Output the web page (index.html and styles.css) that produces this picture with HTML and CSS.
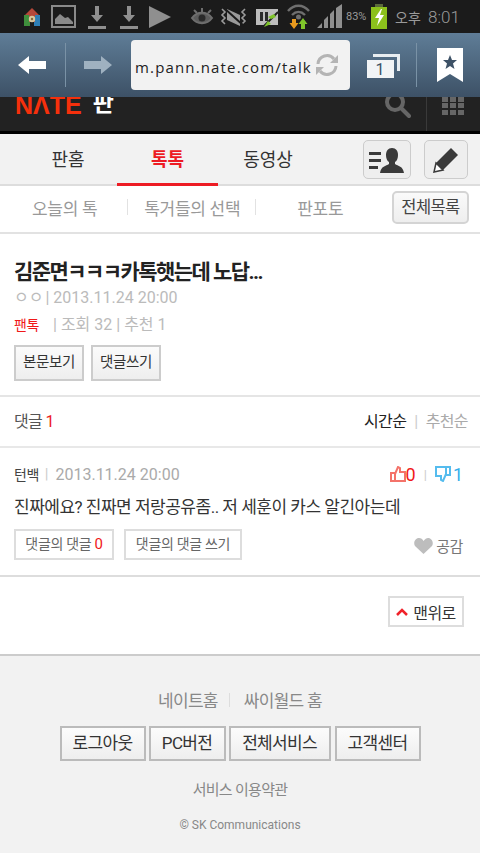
FILE: index.html
```html
<!DOCTYPE html>
<html lang="ko">
<head>
  <meta charset="UTF-8">
  <title>네이트 판 톡톡</title>
  <link rel="stylesheet" href="styles.css">
</head>
<body>
  <div class="status-bar">
    <svg class="status-icons" width="346" height="33" viewBox="0 0 346 33">
      <!-- app icon -->
      <path d="M32 8l8 8H24z" fill="#b5483a"/>
      <rect x="24" y="15" width="6" height="11" fill="#3f8f3c"/>
      <rect x="34" y="15" width="6" height="11" fill="#2f7fb5"/>
      <rect x="29" y="14" width="6" height="8" fill="#b5483a"/>
      <circle cx="32" cy="19" r="3.2" fill="#d8c8a0"/>
      <circle cx="32" cy="19" r="1.2" fill="#8a6a3a"/>
      <!-- picture -->
      <rect x="52" y="6" width="23" height="21" fill="none" stroke="#8a8a8a" stroke-width="2"/>
      <path d="M55 24v-5l5-5 5 4 3-1 5 5v2z" fill="#8a8a8a"/>
      <!-- downloads -->
      <g fill="#8f8f8f">
        <path d="M95 6h4v9h4l-6 7-6-7h4z"/>
        <rect x="88" y="26" width="18" height="3"/>
        <path d="M127 6h4v9h4l-6 7-6-7h4z"/>
        <rect x="120" y="26" width="18" height="3"/>
      </g>
      <path d="M149 6l22 11-22 11z" fill="#8f8f8f"/>
      <!-- eye -->
      <g stroke="#6e6e6e" fill="none">
        <path d="M192 18c5-7 15-7 20 0-5 7-15 7-20 0z" stroke-width="2" fill="#5c5c5c"/>
        <path d="M194 10l3 3M202 8v4M211 10l-3 3" stroke-width="2"/>
      </g>
      <circle cx="202" cy="18" r="3.5" fill="#2a2a2a"/>
      <!-- vibrate -->
      <g fill="none" stroke="#9a9a9a" stroke-width="1.6">
        <path d="M222 9l3 3-3 3 3 3-3 3 3 3"/>
        <path d="M245 9l-3 3 3 3-3 3 3 3-3 3"/>
      </g>
      <path d="M227 9l13 6v11l-13-6z" fill="#9a9a9a"/>
      <path d="M224 8l20 18" stroke="#1b1b1b" stroke-width="2"/>
      <!-- sim -->
      <path d="M256 9h22v16h-22z" fill="#bdbdbd"/>
      <rect x="260" y="12" width="3" height="9" fill="#2a2a2a"/>
      <rect x="265" y="12" width="3" height="9" fill="#2a2a2a"/>
      <path d="M264 26l14-14" stroke="#222" stroke-width="2"/>
      <path d="M268 17l6-3 2 3-5 2zM264 27l4-6 3 3z" fill="#7fc52a"/>
      <!-- wifi -->
      <g fill="none" stroke="#6f6f6f" stroke-width="2.4">
        <path d="M288 11c6-7 15-7 21 0"/>
        <path d="M292 15c4-4 9-4 13 0"/>
      </g>
      <circle cx="298.500" cy="17" r="2.5" fill="#6f6f6f"/>
      <path d="M292 19h4v4h2.500l-4.500 6-4.500-6H292z" fill="#e89a1e"/>
      <path d="M301 29v-5h-2.500l4.500-6 4.500 6H305v5z" fill="#7fc52a"/>
      <!-- signal -->
      <path d="M317 28l5-5v5zM324 28v-8l4-4v12zM330 28V14l4-4v18zM336 28V8l6-4v24z" fill="#8f8f8f"/>
    </svg>
    <span class="batt-pct">83%</span>
    <svg class="batt" width="16" height="25" viewBox="0 0 16 25">
      <rect x="4" y="0" width="8" height="3" fill="#5a6a3a"/>
      <rect x="0" y="3" width="16" height="22" fill="#8cc11c"/>
      <path d="M10 5L4 14h4l-2 8 7-11H9l2-6z" fill="#fff"/>
    </svg>
    <span class="ampm">오후</span>
    <span class="clock">8:01</span>
  </div>

  <div class="browser-bar">
    <svg class="tool-back" width="28" height="18" viewBox="0 0 28 18"><path d="M0 9l11-9v5h17v8H11v5z" fill="#fff"/></svg>
    <span class="tool-sep sep-a"></span>
    <svg class="tool-fwd" width="28" height="18" viewBox="0 0 28 18"><path d="M28 9L17 0v5H0v8h17v5z" fill="#9fb1c0"/></svg>
    <div class="url-box">
      <span class="url-text">m.pann.nate.com/talk</span>
      <svg width="24" height="24" viewBox="0 0 24 24" fill="none" stroke="#b4b4b4" stroke-width="3">
        <path d="M3 11A9 9 0 0 1 19 6"/>
        <path d="M21 13A9 9 0 0 1 5 18"/>
        <path d="M23 2v8h-8zM1 22v-8h8z" fill="#b4b4b4" stroke="none"/>
      </svg>
    </div>
    <svg class="tool-tabs" width="33" height="26" viewBox="0 0 33 26">
      <path d="M6 2h27v17h-3V5H6z" fill="#e8edf1"/>
      <rect x="0" y="8" width="27" height="18" fill="#f2f4f6"/>
      <text x="13" y="23" text-anchor="middle" class="tabs-num">1</text>
    </svg>
    <span class="tool-sep sep-b"></span>
    <svg class="tool-mark" width="26" height="34" viewBox="0 0 26 34">
      <path d="M0 0h26v34L13 26 0 34z" fill="#fff"/>
      <path d="M13 7l2 5h5l-4 3.500 1.500 5.500-4.500-3-4.500 3L10 15.500 6 12h5z" fill="#3d5166"/>
    </svg>
  </div>

  <div class="site-header">
    <span class="site-logo">N<span class="logo-a">Λ</span>TE</span>
    <span class="site-name">판</span>
    <svg class="site-search" width="26" height="22" viewBox="0 0 26 22" fill="none" stroke="#666" stroke-width="4">
      <circle cx="10" cy="5" r="8"/>
      <path d="M16 11l8 8" stroke-linecap="round"/>
    </svg>
    <span class="site-sep"></span>
    <svg width="22" height="18" viewBox="0 0 22 18" fill="#666">
      <rect x="0" y="0" width="6" height="5"/><rect x="8" y="0" width="6" height="5"/><rect x="16" y="0" width="6" height="5"/>
      <rect x="0" y="6" width="6" height="5"/><rect x="8" y="6" width="6" height="5"/><rect x="16" y="6" width="6" height="5"/>
      <rect x="0" y="13" width="6" height="5"/><rect x="8" y="13" width="6" height="5"/><rect x="16" y="13" width="6" height="5"/>
    </svg>
  </div>

  <div class="main-tabs">
    <a class="main-tab">판홈</a>
    <a class="main-tab on">톡톡</a>
    <a class="main-tab">동영상</a>
    <div class="tab-btns">
      <span class="icon-btn user-btn">
        <svg width="36" height="26" viewBox="0 0 36 26" fill="#3a3a3a">
          <rect x="0" y="5" width="12" height="3"/><rect x="0" y="12" width="12" height="3"/><rect x="0" y="19" width="9" height="3"/>
          <path d="M23 1c4 0 6 3 6 7 0 3-1 6-3 7v2c3 2 8 2 9 9H11c1-7 6-7 9-9v-2c-2-1-3-4-3-7 0-4 2-7 6-7z"/>
        </svg>
      </span>
      <span class="icon-btn pen-btn">
        <svg width="26" height="26" viewBox="0 0 26 26">
          <path d="M18 1l7 7L10 23 3 16z" fill="#3a3a3a"/>
          <path d="M3 16l7 7-9 2z" fill="#fff" stroke="#3a3a3a" stroke-width="1.500"/>
        </svg>
      </span>
    </div>
  </div>

  <div class="sub-nav">
    <a class="sub-link link-today">오늘의 톡</a>
    <span class="sub-sep"></span>
    <a class="sub-link link-pick">톡거들의 선택</a>
    <span class="sub-sep"></span>
    <a class="sub-link link-fan">판포토</a>
    <a class="all-btn">전체목록</a>
  </div>

  <div class="article">
    <h1 class="title">김준면ㅋㅋㅋ카톡햇는데 노답...</h1>
    <p class="meta">ㅇㅇ<span class="bar">|</span> 2013.11.24 20:00</p>
    <p class="meta-sub"><span class="cate">팬톡</span><span class="bar">|</span> 조회 32 <span class="bar">|</span> 추천 1</p>
    <div class="article-btns">
      <a class="btn">본문보기</a>
      <a class="btn">댓글쓰기</a>
    </div>
  </div>

  <div class="reply-head">
    <span class="reply-count">댓글 <em>1</em></span>
    <span class="sort"><b>시간순</b><i class="bar">|</i>추천순</span>
  </div>

  <div class="reply">
    <div class="reply-top">
      <span class="nick">턴백</span><span class="bar">|</span><span class="date">2013.11.24 20:00</span>
      <span class="votes">
        <svg width="16" height="16" viewBox="0 0 16 16" fill="none" stroke="#f4736a" stroke-width="2"><rect x="1" y="7" width="4" height="8"/><path d="M5 8l3-7 2 1v4h5v9H5"/></svg>
        <em class="up">0</em>
        <i class="bar">|</i>
        <svg width="16" height="16" viewBox="0 0 16 16" fill="none" stroke="#55bcee" stroke-width="2"><rect x="11" y="1" width="4" height="8"/><path d="M11 8l-3 7-2-1v-4H1V1h10"/></svg>
        <em class="down">1</em>
      </span>
    </div>
    <p class="reply-text">진짜에요? 진짜면 저랑공유좀.. 저 세훈이 카스 알긴아는데</p>
    <div class="reply-btns">
      <a class="btn-line re-a">댓글의 댓글 <em>0</em></a>
      <a class="btn-line re-b">댓글의 댓글 쓰기</a>
      <span class="like">
        <svg width="19" height="16" viewBox="0 0 19 16"><path d="M9.500 16L1 8C-1 5 1 0 5 0c2 0 3.500 1 4.500 3C11 1 12.500 0 14 0c4 0 6 5 4 8z" fill="#bdbdbd"/></svg>공감
      </span>
    </div>
  </div>

  <div class="to-top">
    <a class="top-btn">
      <svg width="12" height="8" viewBox="0 0 12 8" fill="none" stroke="#f0222a" stroke-width="2.500"><path d="M1 7l5-5 5 5"/></svg>맨위로
    </a>
  </div>

  <div class="footer">
    <div class="foot-links"><a>네이트홈</a><span class="foot-sep"></span><a>싸이월드 홈</a></div>
    <div class="foot-btns">
      <a class="foot-btn b1">로그아웃</a>
      <a class="foot-btn b2">PC버전</a>
      <a class="foot-btn b3">전체서비스</a>
      <a class="foot-btn b4">고객센터</a>
    </div>
    <p class="terms">서비스 이용약관</p>
    <p class="copy">© SK Communications</p>
  </div>
</body>
</html>
```

FILE: styles.css
```css
* {
  box-sizing: border-box;
}
html, body {
  margin: 0;
  padding: 0;
}
body {
  width: 480px;
  height: 853px;
  overflow: hidden;
  background: #fff;
  font-family: Roboto, "Noto Sans CJK KR", sans-serif;
  color: #333;
}
a {
  color: inherit;
  text-decoration: none;
}
em, i {
  font-style: normal;
}
p, h1 {
  margin: 0;
}

/* phone status bar */
.status-bar {
  display: flex;
  align-items: center;
  height: 33px;
  background: #1b1b1b;
  color: #9a9a9a;
}
.status-icons {
  flex: none;
}
.batt-pct {
  width: 25px;
  font-size: 11px;
}
.batt {
  flex: none;
}
.ampm {
  width: 33px;
  margin-left: 8px;
  font-family: "Noto Sans CJK KR", sans-serif;
  font-size: 14px;
  white-space: nowrap;
}
.clock {
  font-size: 17px;
  font-weight: 300;
  white-space: nowrap;
}

/* browser toolbar */
.browser-bar {
  display: flex;
  align-items: center;
  height: 64px;
  padding-left: 18px;
  background: linear-gradient(#5f7d97, #3d5166);
}
.browser-bar svg {
  flex: none;
}
.tool-sep {
  width: 1px;
  height: 44px;
  background: #7a92a6;
}
.sep-a {
  margin: 0 18px 0 19px;
}
.tool-fwd {
  margin-right: 19px;
}
.url-box {
  display: flex;
  align-items: center;
  width: 219px;
  height: 50px;
  padding: 0 11px 0 4px;
  background: #f2f2f2;
  border-radius: 4px;
  overflow: hidden;
}
.url-text {
  flex: 1;
  padding-top: 3px;
  font-family: "Open Sans", sans-serif;
  font-size: 15px;
  letter-spacing: 1.15px;
  color: #222;
  white-space: nowrap;
}
.tool-tabs {
  margin-left: 17px;
}
.tabs-num {
  font-family: Roboto, sans-serif;
  font-size: 16px;
  fill: #3d5166;
}
.sep-b {
  margin: 0 20px 0 16px;
}

/* site header, scrolled under the toolbar */
.site-header {
  display: flex;
  align-items: flex-start;
  height: 37px;
  padding-left: 15px;
  background: #222;
  border-bottom: 3px solid #000;
  overflow: hidden;
}
.site-logo {
  margin-top: -4px;
  font-family: "Liberation Sans", sans-serif;
  font-size: 25px;
  line-height: 25px;
  font-weight: bold;
  color: #f5300c;
}
.site-name {
  margin: -7px 0 0 11px;
  font-size: 23px;
  line-height: 28px;
  font-weight: bold;
  color: #fff;
}
.site-search {
  margin-left: auto;
}
.site-sep {
  width: 1px;
  height: 34px;
  margin: 0 15px;
  background: #3a3a3a;
}
.site-header svg:last-child {
  margin-right: 16px;
}

/* main tabs */
.main-tabs {
  display: flex;
  height: 52px;
  padding-left: 18px;
  background: #f2f2f2;
  border-bottom: 2px solid #ddd;
}
.main-tab {
  width: 100px;
  height: 52px;
  line-height: 52px;
  text-align: center;
  font-size: 18px;
  color: #333;
}
.main-tab.on {
  width: 101px;
  margin-left: -1px;
  height: 52px;
  color: #ed1c24;
  font-weight: bold;
  border-bottom: 3px solid #ed1c24;
}
.tab-btns {
  display: flex;
  gap: 13px;
  margin: 6px 0 0 auto;
  padding-right: 12px;
}
.icon-btn {
  display: flex;
  align-items: center;
  justify-content: center;
  height: 39px;
  background: #eee;
  border: 1.500px solid #ccc;
  border-radius: 5px;
}
.user-btn {
  width: 48px;
}
.pen-btn {
  width: 44px;
}

/* second level nav */
.sub-nav {
  display: flex;
  align-items: center;
  height: 48px;
  padding-bottom: 4px;
  border-bottom: 2px solid #e2e2e2;
}
.sub-link {
  font-size: 17px;
  letter-spacing: -0.3px;
  color: #999;
  white-space: nowrap;
}
.link-today {
  margin: 0 30px 0 32px;
}
.link-pick {
  margin: 0 15px 0 16px;
}
.link-fan {
  margin-left: 41px;
}
.sub-sep {
  width: 1px;
  height: 16px;
  background: #e2e2e2;
}
.all-btn {
  margin-left: auto;
  margin-right: 11px;
  width: 77px;
  height: 33px;
  line-height: 29px;
  text-align: center;
  font-size: 16.500px;
  letter-spacing: -0.6px;
  color: #444;
  background: linear-gradient(#fafafa, #eee);
  border: 2px solid #d4d4d4;
  border-radius: 5px;
}

/* article */
.article {
  height: 163px;
  padding: 24px 14px 0;
  border-bottom: 2px solid #e5e5e5;
}
.title {
  font-size: 21px;
  line-height: 29px;
  font-weight: bold;
  letter-spacing: -1.57px;
  color: #222;
}
.meta {
  margin-top: -1px;
  font-size: 16px;
  line-height: 24px;
  color: #bbb;
}
.meta .bar {
  margin-left: 2px;
}
.meta-sub {
  margin-top: 3px;
  font-size: 16px;
  line-height: 24px;
  color: #bbb;
}
.cate {
  display: inline-block;
  width: 39px;
  font-size: 14px;
  letter-spacing: -0.5px;
  color: #f01818;
}
.article-btns {
  display: flex;
  gap: 7px;
  margin-top: 8px;
}
.btn {
  width: 70px;
  height: 36px;
  line-height: 32px;
  text-align: center;
  font-size: 14.500px;
  letter-spacing: -0.4px;
  color: #333;
  background: linear-gradient(#fbfbfb, #eee);
  border: 2px solid #ccc;
}

/* reply */
.reply-head {
  display: flex;
  justify-content: space-between;
  align-items: center;
  height: 51px;
  padding: 0 12px 3px 14px;
  border-bottom: 2px solid #e8e8e8;
  font-size: 16px;
  letter-spacing: -0.6px;
}
.reply-count {
  color: #555;
}
.reply-count em {
  color: #ed1c24;
}
.sort {
  color: #aaa;
}
.sort b {
  font-weight: normal;
  color: #222;
}
.sort .bar {
  margin: 0 8px;
  color: #ccc;
}
.reply {
  height: 129px;
  padding: 14px 17px 0 14px;
  border-bottom: 2px solid #ddd;
}
.reply-top {
  display: flex;
  align-items: center;
  height: 24px;
}
.nick {
  font-size: 14px;
  letter-spacing: -0.5px;
  color: #444;
}
.reply-top > .bar {
  margin: 0 7px 0 6px;
  font-size: 15px;
  color: #ccc;
}
.date {
  font-size: 16px;
  color: #aaa;
}
.votes {
  display: flex;
  align-items: center;
  margin-left: auto;
  font-size: 18px;
}
.votes .bar {
  margin: 0 8px;
  font-size: 13px;
  color: #ccc;
}
.up {
  color: #f01818;
}
.down {
  margin-left: 2px;
  color: #34aeea;
}
.reply-text {
  margin-top: 8px;
  font-size: 17px;
  line-height: 26px;
  letter-spacing: -0.5px;
  color: #333;
}
.reply-btns {
  display: flex;
  align-items: center;
  margin-top: 9px;
}
.btn-line {
  height: 31px;
  line-height: 27px;
  text-align: center;
  font-size: 14px;
  letter-spacing: -0.3px;
  color: #666;
  background: #fff;
  border: 2px solid #ddd;
  white-space: nowrap;
}
.btn-line em {
  font-size: 15px;
  color: #f01818;
}
.re-a {
  width: 100px;
}
.re-b {
  width: 118px;
  margin-left: 10px;
}
.like {
  display: flex;
  align-items: center;
  gap: 3px;
  margin-left: auto;
  margin-top: 2px;
  font-size: 15px;
  letter-spacing: -0.4px;
  color: #777;
}

/* back to top */
.to-top {
  display: flex;
  justify-content: flex-end;
  height: 77px;
  padding: 19px 16px 0 0;
}
.top-btn {
  display: flex;
  align-items: center;
  justify-content: center;
  gap: 5px;
  width: 76px;
  height: 31px;
  font-size: 16px;
  letter-spacing: -0.5px;
  color: #333;
  background: #fff;
  border: 2px solid #ddd;
}

/* footer */
.footer {
  height: 199px;
  padding-top: 31px;
  text-align: center;
  background: #f2f2f2;
  border-top: 2px solid #ccc;
}
.foot-links {
  display: flex;
  justify-content: center;
  align-items: center;
  height: 24px;
  font-size: 17px;
  letter-spacing: -0.7px;
  color: #888;
}
.foot-sep {
  width: 1px;
  height: 14px;
  margin: 2px 14px 0 11px;
  background: #ddd;
}
.foot-btns {
  display: flex;
  justify-content: center;
  gap: 3px;
  margin-top: 15px;
}
.foot-btn {
  height: 35px;
  line-height: 31px;
  font-size: 17px;
  letter-spacing: -0.7px;
  color: #333;
  background: linear-gradient(#fcfcfc, #eee);
  border: 2px solid #bbb;
}
.b1 {
  width: 86px;
}
.b2 {
  width: 77px;
}
.b3 {
  width: 102px;
}
.b4 {
  width: 86px;
  margin-left: 1px;
}
.terms {
  margin-top: 17px;
  font-size: 15px;
  line-height: 24px;
  letter-spacing: -0.7px;
  color: #888;
}
.copy {
  margin-top: 11px;
  font-size: 12px;
  line-height: 24px;
  color: #888;
}
```
